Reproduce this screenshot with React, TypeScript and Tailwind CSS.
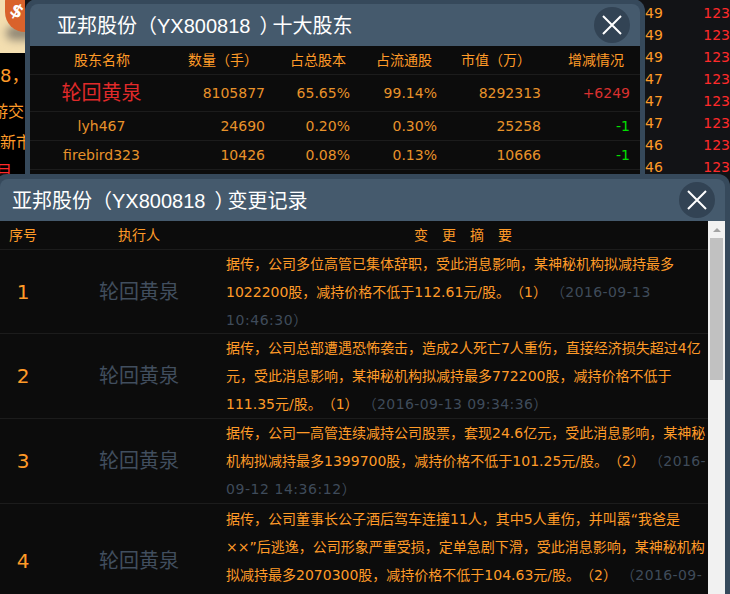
const cjk = "font-['DejaVu_Sans','Noto_Sans_CJK_SC',sans-serif] [text-spacing-trim:space-all]";
const titleFont = "font-['Liberation_Sans','Noto_Sans_CJK_SC',sans-serif]";

const topRows = [
  { name: '轮回黄泉', big: true, qty: '8105877', total: '65.65%', flow: '99.14%', value: '8292313', change: '+6249', up: true },
  { name: 'lyh467', big: false, qty: '24690', total: '0.20%', flow: '0.30%', value: '25258', change: '-1', up: false },
  { name: 'firebird323', big: false, qty: '10426', total: '0.08%', flow: '0.13%', value: '10666', change: '-1', up: false },
];

const logRows = [
  {
    id: '1',
    h: 'h-[84px]',
    top: false,
    lines: ['据传，公司多位高管已集体辞职，受此消息影响，某神秘机构拟减持最多', '1022200股，减持价格不低于112.61元/股。（1）'],
    tail: '（2016-09-13',
    after: ['10:46:30）'],
  },
  {
    id: '2',
    h: 'h-[85px]',
    top: false,
    lines: ['据传，公司总部遭遇恐怖袭击，造成2人死亡7人重伤，直接经济损失超过4亿', '元，受此消息影响，某神秘机构拟减持最多772200股，减持价格不低于', '111.35元/股。（1）'],
    tail: '（2016-09-13 09:34:36）',
    after: [],
  },
  {
    id: '3',
    h: 'h-[85px]',
    top: false,
    lines: ['据传，公司一高管连续减持公司股票，套现24.6亿元，受此消息影响，某神秘', '机构拟减持最多1399700股，减持价格不低于101.25元/股。（2）'],
    tail: '（2016-',
    after: ['09-12 14:36:12）'],
  },
  {
    id: '4',
    h: 'h-[114px]',
    top: true,
    lines: ['据传，公司董事长公子酒后驾车连撞11人，其中5人重伤，并叫嚣“我爸是', '××”后逃逸，公司形象严重受损，定单急剧下滑，受此消息影响，某神秘机构', '拟减持最多2070300股，减持价格不低于104.63元/股。（2）'],
    tail: '（2016-09-',
    after: [],
  },
];

const sideNums = ['49', '49', '49', '47', '47', '47', '46', '46'];

function CloseButton() {
  return (
    <div className="w-9 h-9 rounded-full bg-[#324354] flex items-center justify-center">
      <svg width="20" height="20" viewBox="0 0 20 20" fill="none" stroke="#ffffff" strokeWidth="2">
        <path d="M1 1 L19 19 M19 1 L1 19" />
      </svg>
    </div>
  );
}

function WindowTitle({ suffix }: { suffix: string }) {
  return (
    <span className={`text-[20px] text-white mt-[2px] whitespace-nowrap ${titleFont}`}>
      亚邦股份（<span className="mr-[9px]">YX800818</span><span className="inline-block w-[13px] overflow-hidden align-bottom">）</span>{suffix}
    </span>
  );
}

export default function App() {
  return (
    <div className={`relative w-[730px] h-[594px] overflow-hidden bg-[#121316] ${cjk}`}>
      {/* page behind the windows */}
      <div className="absolute left-0 top-0 w-[25px] h-[53px] bg-[#f3deb0] overflow-hidden">
        <div className="absolute left-[6px] top-[26px] w-[30px] h-[14px] rounded-full bg-[#8f8674] blur-[4px]" />
        <div className="absolute left-[5px] top-[-18px] w-[40px] h-[50px] rounded-full bg-[#d9622b]" />
        <div className="absolute left-[11px] top-[-3px] text-[18px] font-bold text-white rotate-[30deg]">$</div>
      </div>
      <div className="absolute left-0 top-[53px] w-[25px] h-[121px] bg-black overflow-hidden text-[#ff9b28] text-[16px]">
        <div className="absolute left-0 top-[12px] text-[18px] leading-[22px] whitespace-nowrap">8，</div>
        <div className="absolute left-[-8px] top-[48px] leading-[22px] whitespace-nowrap">游交</div>
        <div className="absolute left-0 top-[79px] leading-[22px] whitespace-nowrap">新市</div>
        <div className="absolute left-[-4px] top-[108px] leading-[22px] whitespace-nowrap text-[#ff2a2a]">目</div>
      </div>
      <div className="absolute left-[645px] top-0 w-[85px] flex flex-col pt-[2px]">
        {sideNums.map((n, i) => (
          <div key={i} className="flex h-[22px] items-center text-[14px]">
            <span className="text-[#ff9b28] w-[60px]">{n}</span>
            <span className="text-[#ff2a2a]">123</span>
          </div>
        ))}
      </div>

      {/* top window */}
      <div className="absolute left-[25px] top-[-1px] w-[620px] h-[175px] bg-[#36495b] rounded-t-[12px] p-[5px] pb-0">
        <div className="h-[42px] bg-[#455a6d] rounded-t-[8px] flex items-center justify-between pl-[27px] pr-[10px]">
          <WindowTitle suffix="十大股东" />
          <CloseButton />
        </div>
        <div className="bg-[#0c0c0c] h-[128px] text-[14px]">
          <div className="flex h-[29px] items-center border-b border-[#1c1c1c] text-[#ff9b28]">
            <div className="w-[144px] text-center">股东名称</div>
            <div className="w-[90px] pl-[14px] whitespace-nowrap">数量（手）</div>
            <div className="w-[108px] text-center">占总股本</div>
            <div className="w-[64px] text-center">占流通股</div>
            <div className="w-[120px] text-center">市值（万）</div>
            <div className="w-[80px] text-center">增减情况</div>
          </div>
          {topRows.map((r) => (
            <div
              key={r.name}
              className={`flex items-center border-b border-[#1c1c1c] text-[#e8922a] text-[14px] ${r.big ? 'h-[37px]' : 'h-[29px]'}`}
            >
              <div className={`w-[143px] text-center ${r.big ? 'text-[20px] text-[#e02a2a]' : ''}`}>{r.name}</div>
              <div className="w-[92px] text-right">{r.qty}</div>
              <div className="w-[85px] text-right">{r.total}</div>
              <div className="w-[87px] text-right">{r.flow}</div>
              <div className="w-[104px] text-right">{r.value}</div>
              <div className={`w-[89px] text-right ${r.up ? 'text-[#d9302f]' : 'text-[#00e000]'}`}>{r.change}</div>
            </div>
          ))}
        </div>
      </div>

      {/* bottom window */}
      <div className="absolute left-[-5px] top-[174px] w-[735px] h-[430px] bg-[#36495b] rounded-t-[12px] p-[5px] flex flex-col">
        <div className="h-[42px] shrink-0 bg-[#455a6d] rounded-t-[8px] flex items-center justify-between pl-[12px] pr-[10px]">
          <WindowTitle suffix="变更记录" />
          <CloseButton />
        </div>
        <div className="flex flex-1 min-h-0 bg-[#0c0c0c]">
          <div className="w-[708px] overflow-hidden">
            <div className="flex h-[29px] items-center border-b border-[#1c1c1c] text-[#ff9b28] text-[14px]">
              <div className="w-[46px] pl-[9px]">序号</div>
              <div className="w-[186px] text-center">执行人</div>
              <div className="flex-1 pl-[182px] tracking-[14px] whitespace-nowrap">变更摘要</div>
            </div>
            {logRows.map((r) => (
              <div key={r.id} className={`flex items-center border-b border-[#1c1c1c] ${r.h}`}>
                <div className="w-[46px] text-center text-[20px] text-[#ff9b28]">{r.id}</div>
                <div className="w-[180px] pl-[6px] text-center text-[20px] text-[#414e5e]">轮回黄泉</div>
                <div className={`flex-1 text-[14px] leading-[28px] text-[#ff9b28] whitespace-nowrap overflow-hidden ${r.top ? 'self-start pt-[1px]' : ''}`}>
                  {r.lines.map((l, i) => (
                    <div key={i}>
                      {l}
                      {i === r.lines.length - 1 && (
                        <span className="ml-[4px] tracking-[0.4px] text-[#3f4b5a]">{r.tail}</span>
                      )}
                    </div>
                  ))}
                  {r.after.map((l) => (
                    <div key={l} className="tracking-[0.55px] text-[#3f4b5a]">{l}</div>
                  ))}
                </div>
              </div>
            ))}
          </div>
          <div className="w-[17px] shrink-0 bg-[#f1f1f1] flex flex-col items-center">
            <div className="h-[17px] flex items-center justify-center">
              <div className="w-0 h-0 border-x-[4px] border-x-transparent border-b-[4px] border-b-[#a3a3a3]" />
            </div>
            <div className="w-[13px] h-[142px] bg-[#c1c1c1]" />
          </div>
        </div>
      </div>
    </div>
  );
}
